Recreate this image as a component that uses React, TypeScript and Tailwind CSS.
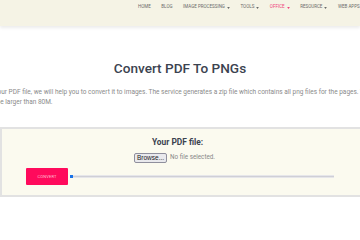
const NAV = [
  { label: 'HOME' },
  { label: 'BLOG' },
  { label: 'IMAGE PROCESSING', menu: true },
  { label: 'TOOLS', menu: true },
  { label: 'OFFICE', menu: true, active: true },
  { label: 'RESOURCE', menu: true },
  { label: 'WEB APPS' },
];

function Caret() {
  return (
    <svg width="3" height="2" viewBox="0 0 4 3" className="ml-[2px] inline-block">
      <path d="M0 0 L4 0 L2 3 Z" fill="currentColor" />
    </svg>
  );
}

function Header() {
  return (
    <header className="relative z-10 h-[26px] bg-[#f5f3e5] shadow-[0_2px_3px_rgba(0,0,0,0.08)]">
      <nav className="flex items-center h-[15px] pl-[138px] gap-[10.5px] whitespace-nowrap">
        {NAV.map((n) => (
          <span
            key={n.label}
            className={
              'flex items-center text-[4.5px] ' +
              (n.active ? 'text-[#f0407a]' : 'text-[#6a6a6a]')
            }
          >
            {n.label}
            {n.menu && <Caret />}
          </span>
        ))}
      </nav>
    </header>
  );
}

export default function App() {
  return (
    <div className="w-[360px] h-[240px] overflow-hidden bg-white font-['Roboto',sans-serif]">
      <Header />
      <h1 className="mt-[33px] text-center text-[13.6px] leading-[18px] font-medium text-[#3b4350]">
        Convert PDF To PNGs
      </h1>
      <div className="flex justify-center mt-[10px]">
        <p className="w-[410px] shrink-0 whitespace-nowrap text-[6.5px] leading-[10px] text-[#8a8a8a]">
          Select your PDF file, we will help you to convert it to images. The service generates a zip file which contains all png files for the pages. The file
          <br />
          cannot be larger than 80M.
        </p>
      </div>
      <section className="mt-[20px] h-[70px] border-t-2 border-b-2 border-l-2 border-[#e2e2e2] bg-[#fbfaef] pt-[8px]">
        <div className="text-center pr-[7px] text-[8.4px] leading-[11px] font-bold text-[#3b4350]">
          Your PDF file:
        </div>
        <div className="flex items-center justify-center gap-[3px] mt-[5px] pr-[13px]">
          <span className="h-[10px] px-[2px] flex items-center rounded-[2px] border border-[#8f8f9d] bg-[#e9e9ed] text-[6.5px] text-[#222] font-['Liberation_Sans',sans-serif]">
            Browse...
          </span>
          <span className="text-[6.3px] text-[#888]">No file selected.</span>
        </div>
        <div className="flex items-center gap-[2px] mt-[5px] pl-[24px] pr-[26px]">
          <button className="w-[42px] h-[17px] bg-[#ff0a5c] text-[4px] tracking-[0.2px] text-[#ffc0d4] rounded-[1px]">
            CONVERT
          </button>
          <div className="relative flex-1 h-[3px] bg-[#cfcfd6] border-y border-[#e6e6ea]">
            <div className="absolute left-0 top-[-1px] w-[3px] h-[3px] bg-[#1a73e8]" />
          </div>
        </div>
      </section>
    </div>
  );
}
